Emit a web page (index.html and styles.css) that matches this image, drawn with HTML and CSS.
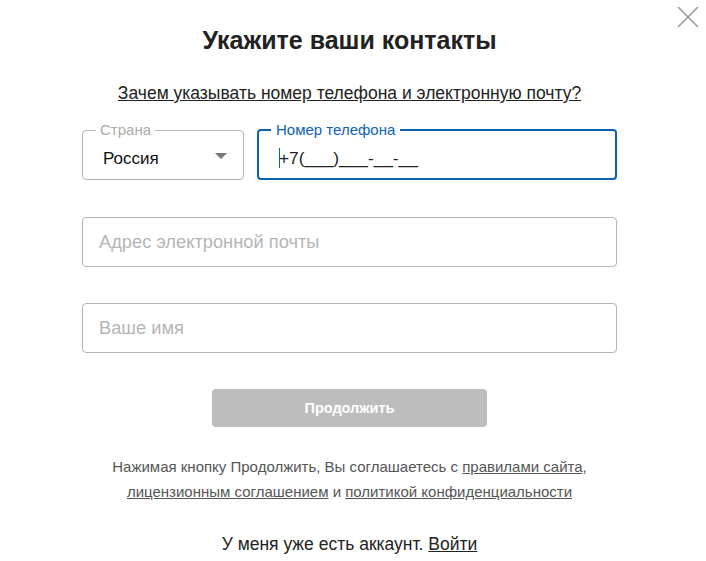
FILE: index.html
```html
<!DOCTYPE html>
<html lang="ru">
<head>
<meta charset="utf-8">
<link rel="stylesheet" href="styles.css">
</head>
<body>
<div class="modal">
  <button class="close" aria-label="Закрыть">
    <svg width="22" height="22" viewBox="0 0 22 22"><path d="M1 1L21 21M21 1L1 21" stroke="#9a9a9a" stroke-width="1.6" fill="none"/></svg>
  </button>
  <h1 class="title">Укажите ваши контакты</h1>
  <p class="why"><a href="#">Зачем указывать номер телефона и электронную почту?</a></p>
  <div class="row">
    <fieldset class="field country">
      <legend>Страна</legend>
      <div class="value">Россия</div>
      <span class="arrow"></span>
    </fieldset>
    <fieldset class="field phone">
      <legend>Номер телефона</legend>
      <div class="value"><span class="caret"></span>+7(___)___-__-__</div>
    </fieldset>
  </div>
  <div class="field plain"><span class="ph">Адрес электронной почты</span></div>
  <div class="field plain"><span class="ph">Ваше имя</span></div>
  <div class="btnrow"><button class="submit">Продолжить</button></div>
  <p class="terms">Нажимая кнопку Продолжить, Вы соглашаетесь с <a href="#">правилами сайта</a>,<br><a href="#">лицензионным соглашением</a> и <a href="#">политикой конфиденциальности</a></p>
  <p class="login">У меня уже есть аккаунт. <a href="#">Войти</a></p>
</div>
</body>
</html>
```
FILE: styles.css
```css
html, body { margin: 0; padding: 0; background: #fff; }
body { font-family: "Liberation Sans", Arial, sans-serif; color: #222; }
.modal { position: relative; width: 535px; padding: 0 0 0 82px; }
.close { position: absolute; left: 677px; top: 6px; width: 22px; height: 22px; padding: 0; border: 0; background: none; }
.close svg { display: block; }
.title { margin: 0; padding-top: 25px; height: 31px; font-size: 25px; line-height: 31px; font-weight: bold; text-align: center; color: #222; }
.why { margin: 27px 0 0; font-size: 17.5px; line-height: 20px; text-align: center; }
.why a { color: #222; text-decoration: underline; }
.row { display: flex; gap: 13px; margin-top: 27px; }
.field { box-sizing: border-box; height: 50px; margin: 0; border: 1px solid #b4b4b4; border-radius: 4px; position: relative; }
fieldset.field { padding: 0 0 0 16px; height: 58px; margin-top: -8px; }
fieldset.field legend { font-size: 15px; line-height: 16px; padding: 0 4px; margin-left: -3px; color: #aaa; }
.country { width: 162px; }
.country .value { font-size: 17px; line-height: 20px; margin-top: 11px; color: #111; padding-left: 4px; }
.arrow { position: absolute; right: 16px; top: 15px; width: 0; height: 0; border-left: 6px solid transparent; border-right: 6px solid transparent; border-top: 6px solid #777; }
.phone { flex: 1; border: 2px solid #0d62b4; padding-left: 20px !important; }
.phone legend { color: #0d62b4 !important; padding: 0 5px !important; margin-left: -8px !important; }
.phone .value { font-size: 17.3px; line-height: 20px; margin-top: 10px; color: #222; position: relative; }
.caret { position: absolute; left: 0; top: 0; width: 1px; height: 20px; background: #0d62b4; }
.plain { margin-top: 37px; display: flex; align-items: center; padding-left: 16px; }
.plain + .plain { margin-top: 36px; }
.ph { font-size: 18.3px; color: #b5b5b5; }
.btnrow { display: flex; justify-content: center; margin-top: 36px; }
.submit { width: 275px; height: 38px; border: 0; border-radius: 4px; background: #bdbdbd; color: #fff; font-family: "Liberation Sans", Arial, sans-serif; font-weight: bold; font-size: 14.5px; }
.terms { margin: 27px 0 0; font-size: 15px; line-height: 25px; text-align: center; color: #555; }
.terms a { color: #555; text-decoration: underline; }
.login { margin: 29px 0 0; font-size: 17.5px; line-height: 22px; text-align: center; color: #222; }
.login a { color: #222; text-decoration: underline; }
```
